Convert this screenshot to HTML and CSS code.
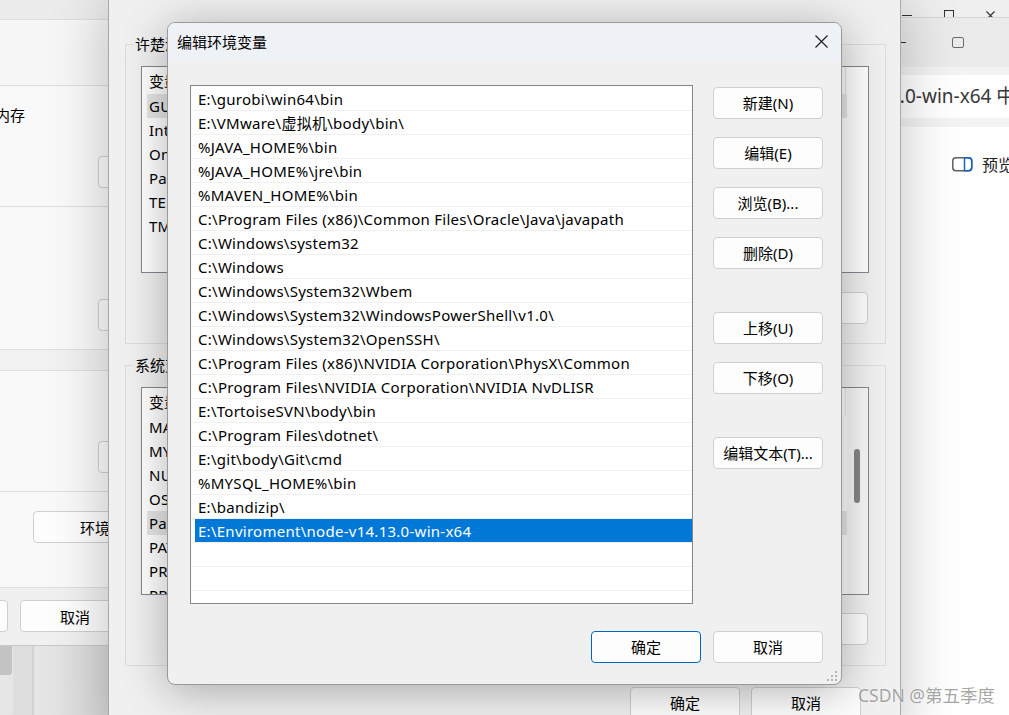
FILE: index.html
```html
<!DOCTYPE html>
<html lang="zh-CN">
<head>
<meta charset="utf-8">
<title>编辑环境变量</title>
<link rel="stylesheet" href="styles.css">
</head>
<body>
<div class="desk">

  <div class="bl-area"><div class="bl-block"></div><div class="bl-strip"></div></div>

  <div class="win win-a">
    <div class="ctrl-row">
      <span class="ctl"><span class="i-min"></span></span>
      <span class="ctl"><span class="i-max"></span></span>
      <span class="ctl"><svg class="i-x" width="9" height="9" viewBox="0 0 9 9"><path d="M0.5 0.5 L8.5 8.5 M8.5 0.5 L0.5 8.5" stroke="#333" stroke-width="1.1"/></svg></span>
    </div>
  </div>

  <div class="win win-b">
    <div class="b-title">
      <span class="i-min b-min"></span>
      <span class="b-max"></span>
    </div>
    <div class="b-band"></div>
    <div class="b-panel">3.0-win-x64 中</div>
    <div class="b-band b-band2"></div>
    <div class="b-content">
      <div class="preview">
        <svg width="21" height="15" viewBox="0 0 21 15"><rect x="0.75" y="0.75" width="19" height="13" rx="3.2" fill="none" stroke="#616161" stroke-width="1.5"/><path d="M12.5 0.75 H16.6 A3.2 3.2 0 0 1 19.75 3.9 V10.6 A3.2 3.2 0 0 1 16.6 13.75 H12.5 Z" fill="none" stroke="#1565c0" stroke-width="1.5"/></svg>
        <span class="preview-t">预览</span>
      </div>
    </div>
  </div>

  <div class="win sysprop">
    <div class="sp-sec sp-top"></div>
    <div class="sp-sec sp-a"></div>
    <div class="sp-sec sp-b">
      <div class="sp-text">内存</div>
      <div class="sp-btn sp-btn-r"></div>
    </div>
    <div class="sp-sec sp-c">
      <div class="sp-btn sp-btn-r"></div>
    </div>
    <div class="sp-sec sp-band"></div>
    <div class="sp-sec sp-d">
      <div class="sp-btn sp-btn-r"></div>
    </div>
    <div class="sp-sec sp-e">
      <div class="sp-btn sp-btn-env">环境变量(N)...</div>
    </div>
    <div class="sp-foot">
      <div class="sp-btn sp-btn-ok">确定</div>
      <div class="sp-btn sp-btn-cancel">取消</div>
    </div>
  </div>

  <div class="win envwin">
    <fieldset class="grp grp1">
      <legend>许楚涵 的用户变量(U)</legend>
      <div class="lv lv1">
        <div class="lv-main">
          <div class="lv-head"><span class="h1">变量</span><span class="h2">值</span></div>
          <div class="lv-row sel"><span class="n">GUROBI_HOME</span><span class="v">E:\gurobi\win64</span></div>
          <div class="lv-row"><span class="n">IntelliJ IDEA</span><span class="v">E:\IDEA\bin;</span></div>
          <div class="lv-row"><span class="n">OneDrive</span><span class="v">C:\Users\OneDrive</span></div>
          <div class="lv-row"><span class="n">Path</span><span class="v">E:\gurobi\win64\bin</span></div>
          <div class="lv-row"><span class="n">TEMP</span><span class="v">%USERPROFILE%\AppData\Local\Temp</span></div>
          <div class="lv-row"><span class="n">TMP</span><span class="v">%USERPROFILE%\AppData\Local\Temp</span></div>
        </div>
      </div>
      <div class="grp-btns">
        <div class="btn">新建(N)...</div>
        <div class="btn">编辑(E)...</div>
        <div class="btn">删除(D)</div>
      </div>
    </fieldset>

    <fieldset class="grp grp2">
      <legend>系统变量(S)</legend>
      <div class="lv lv2">
        <div class="lv-main">
          <div class="lv-head"><span class="h1">变量</span><span class="h2">值</span></div>
          <div class="lv-row"><span class="n">MAVEN_HOME</span><span class="v">E:\maven</span></div>
          <div class="lv-row"><span class="n">MYSQL_HOME</span><span class="v">E:\mysql</span></div>
          <div class="lv-row"><span class="n">NUMBER_OF_PROCESSORS</span><span class="v">16</span></div>
          <div class="lv-row"><span class="n">OS</span><span class="v">Windows_NT</span></div>
          <div class="lv-row sel"><span class="n">Path</span><span class="v">E:\gurobi\win64\bin</span></div>
          <div class="lv-row"><span class="n">PATHEXT</span><span class="v">.COM;.EXE;.BAT</span></div>
          <div class="lv-row"><span class="n">PROCESSOR_ARCHITECTURE</span><span class="v">AMD64</span></div>
          <div class="lv-row"><span class="n">PROCESSOR_IDENTIFIER</span><span class="v">AMD64 Family 25</span></div>
        </div>
        <div class="lv-scroll"><div class="thumb"></div></div>
      </div>
      <div class="grp-btns">
        <div class="btn">新建(W)...</div>
        <div class="btn">编辑(I)...</div>
        <div class="btn">删除(L)</div>
      </div>
    </fieldset>

    <div class="env-foot">
      <div class="btn">确定</div>
      <div class="btn">取消</div>
    </div>
  </div>

  <div class="dialog">
    <div class="dlg-title">
      <span class="dlg-title-t">编辑环境变量</span>
      <span class="dlg-close"><svg width="13" height="13" viewBox="0 0 13 13"><path d="M0.5 0.5 L12.5 12.5 M12.5 0.5 L0.5 12.5" stroke="#1a1a1a" stroke-width="1.1"/></svg></span>
    </div>
    <div class="dlg-body">
      <div class="plist">
        <div class="pl-row"><div class="pl-cell">E:\gurobi\win64\bin</div></div>
        <div class="pl-row"><div class="pl-cell">E:\VMware\虚拟机\body\bin\</div></div>
        <div class="pl-row"><div class="pl-cell">%JAVA_HOME%\bin</div></div>
        <div class="pl-row"><div class="pl-cell">%JAVA_HOME%\jre\bin</div></div>
        <div class="pl-row"><div class="pl-cell">%MAVEN_HOME%\bin</div></div>
        <div class="pl-row"><div class="pl-cell">C:\Program Files (x86)\Common Files\Oracle\Java\javapath</div></div>
        <div class="pl-row"><div class="pl-cell">C:\Windows\system32</div></div>
        <div class="pl-row"><div class="pl-cell">C:\Windows</div></div>
        <div class="pl-row"><div class="pl-cell">C:\Windows\System32\Wbem</div></div>
        <div class="pl-row"><div class="pl-cell">C:\Windows\System32\WindowsPowerShell\v1.0\</div></div>
        <div class="pl-row"><div class="pl-cell">C:\Windows\System32\OpenSSH\</div></div>
        <div class="pl-row"><div class="pl-cell">C:\Program Files (x86)\NVIDIA Corporation\PhysX\Common</div></div>
        <div class="pl-row"><div class="pl-cell">C:\Program Files\NVIDIA Corporation\NVIDIA NvDLISR</div></div>
        <div class="pl-row"><div class="pl-cell">E:\TortoiseSVN\body\bin</div></div>
        <div class="pl-row"><div class="pl-cell">C:\Program Files\dotnet\</div></div>
        <div class="pl-row"><div class="pl-cell">E:\git\body\Git\cmd</div></div>
        <div class="pl-row"><div class="pl-cell">%MYSQL_HOME%\bin</div></div>
        <div class="pl-row"><div class="pl-cell">E:\bandizip\</div></div>
        <div class="pl-row sel"><div class="pl-cell">E:\Enviroment\node-v14.13.0-win-x64</div></div>
        <div class="pl-row"><div class="pl-cell"></div></div>
        <div class="pl-row"><div class="pl-cell"></div></div>
        <div class="pl-row"><div class="pl-cell"></div></div>
      </div>
      <div class="dlg-side">
        <div class="btn b-first">新建(N)</div>
        <div class="btn">编辑(E)</div>
        <div class="btn">浏览(B)...</div>
        <div class="btn">删除(D)</div>
        <div class="btn b-gap">上移(U)</div>
        <div class="btn">下移(O)</div>
        <div class="btn b-gap">编辑文本(T)...</div>
      </div>
    </div>
    <div class="dlg-foot">
      <div class="btn btn-default">确定</div>
      <div class="btn">取消</div>
    </div>
    <svg class="grip" width="11" height="11" viewBox="0 0 11 11"><g fill="#b5b5b5"><rect x="8" y="0" width="2" height="2"/><rect x="4" y="4" width="2" height="2"/><rect x="8" y="4" width="2" height="2"/><rect x="0" y="8" width="2" height="2"/><rect x="4" y="8" width="2" height="2"/><rect x="8" y="8" width="2" height="2"/></g></svg>
  </div>

  <div class="watermark">CSDN @第五季度</div>
</div>
</body>
</html>
```

FILE: styles.css
```css
* { box-sizing: border-box; }
html, body { margin: 0; padding: 0; }
body {
  width: 1009px; height: 715px; overflow: hidden; background: #fff;
  font-family: "Noto Sans", "Noto Sans CJK SC", sans-serif;
  font-size: 15px; color: #000;
}
.desk { position: relative; width: 1009px; height: 715px; overflow: hidden; background: #fff; }

.win { position: absolute; }

/* generic button */
.btn {
  width: 110px; height: 32px; background: #fdfdfd;
  border: 1px solid #d0d0d0; border-radius: 4px;
  display: flex; align-items: center; justify-content: center;
  font-size: 15px; line-height: 20px; white-space: nowrap; color: #000;
  font-family: "Noto Sans", "Noto Sans CJK SC", sans-serif;
}

/* bottom-left desktop area */
.bl-area {
  position: absolute; left: 0; top: 640px; width: 130px; height: 80px;
  background: linear-gradient(to right, #e6e6e6 0%, #e4e4e4 40%, #d2d2d2 100%);
  display: flex; align-items: flex-start;
}
.bl-block { width: 12px; height: 35px; background: #c3c3c3; border-bottom-right-radius: 3px; }
.bl-strip { width: 21px; height: 80px; margin-left: 1px; background: #dedede; border-right: 2px solid #d2d2d2; }

/* top-right window A */
.win-a { left: 880px; top: 0; width: 140px; height: 30px; background: #efefef; }
.ctrl-row { display: flex; justify-content: flex-end; align-items: center; height: 30px; padding-right: 9px; }
.ctl { width: 41.5px; height: 30px; display: flex; align-items: center; justify-content: center; }
.i-min { display: block; width: 10px; height: 1px; background: #333; }
.i-max { display: block; width: 10px; height: 10px; border: 1px solid #333; }

/* window B */
.win-b { left: 880px; top: 17px; width: 140px; height: 698px; background: #fff; border-top: 1px solid #d6d6d6; display: flex; flex-direction: column; }
.b-title { height: 49px; background: #ebebeb; display: flex; align-items: center; padding-left: 16px; }
.b-min { margin-top: -1px; }
.b-max { width: 12px; height: 11px; border: 1px solid #6b6b6b; border-radius: 2px; margin-left: 46px; }
.b-band { height: 8px; background: #f3f3f3; }
.b-band2 { height: 9px; }
.b-panel { height: 43px; background: #fff; padding-left: 9px; line-height: 43px; font-size: 19px; color: #383838; white-space: nowrap; font-family: "Noto Sans", "Noto Sans CJK SC", sans-serif; }
.b-content { flex: 1; background: #fff; padding: 30px 0 0 72px; }
.preview { display: flex; align-items: center; height: 15px; }
.preview-t { margin-left: 9px; font-size: 16px; line-height: 20px; color: #222; white-space: nowrap; }

/* left window: system properties */
.sysprop { left: 0; top: 0; width: 250px; height: 646px; background: #f9f9f9; border-bottom: 1px solid #c8c8c8; display: flex; flex-direction: column; }
.sp-sec { border-bottom: 1px solid #dedede; }
.sp-top { height: 20px; background: #ececec; }
.sp-a { height: 66px; background: #f6f6f6; }
.sp-b { height: 121px; padding-top: 19px; }
.sp-text { line-height: 20px; font-size: 15px; margin-left: -5px; font-family: "Noto Sans CJK SC", sans-serif; }
.sp-btn {
  height: 32px; width: 110px; background: #fdfdfd; border: 1px solid #d0d0d0; border-radius: 4px;
  display: flex; align-items: center; justify-content: center; font-size: 15px; white-space: nowrap;
  font-family: "Noto Sans CJK SC", sans-serif;
}
.sp-btn-r { margin-left: 98px; }
.sp-b .sp-btn-r { margin-top: 31px; }
.sp-c { height: 143px; padding-top: 92px; }
.sp-band { height: 21px; background: #f2f2f2; }
.sp-d { height: 121px; padding-top: 70px; }
.sp-e { height: 96px; padding-top: 19px; }
.sp-btn-env { margin-left: 33px; width: 180px; justify-content: flex-start; padding-left: 46px; }
.sp-foot { flex: 1; background: #f0f0f0; display: flex; gap: 12px; padding-top: 12px; margin-left: -102px; }

/* main environment variables window */
.envwin {
  left: 108px; top: 0; width: 793px; height: 740px; background: #f0f0f0;
  border-left: 1px solid #a9a9a9; border-right: 1px solid #a9a9a9;
  padding: 35px 14px 0 16px;
  box-shadow: 0 0 55px rgba(0,0,0,0.24);
  display: flex; flex-direction: column;
}
.grp { margin: 0; border: 1px solid #dcdcdc; padding: 0 16px 19px 15px; min-width: 0; }
.grp legend { font-size: 15px; line-height: 18px; padding: 0 2px; margin-left: -8px; font-family: "Noto Sans CJK SC", sans-serif; }
.grp2 { margin-top: 12px; padding-bottom: 20px; }
.lv { margin-top: 13px; border: 1px solid #828790; background: #fff; display: flex; overflow: hidden; }
.lv1 { height: 207px; }
.lv2 { height: 208px; }
.lv-main { flex: 1; min-width: 0; }
.lv-head { display: flex; height: 27px; line-height: 27px; font-family: "Noto Sans CJK SC", sans-serif; }
.lv-head .h1 { width: 200px; padding-left: 7px; border-right: 1px solid #e5e5e5; }
.lv-head .h2 { width: 504px; padding-left: 7px; border-right: 1px solid #e5e5e5; }
.lv-row { display: flex; height: 24px; line-height: 24px; margin-left: 5px; margin-right: 21px; padding-left: 2px; white-space: nowrap; letter-spacing: 0.25px; }
.lv2 .lv-row { margin-right: 0; }
.lv-row.sel { background: #e6e6e6; }
.lv-row .n { width: 195px; overflow: hidden; }
.grp-btns { display: flex; justify-content: flex-end; gap: 12px; margin-top: 19px; padding-right: 1px; }
.grp2 .grp-btns { margin-top: 18px; }
.lv-scroll { width: 21px; background: #f7f7f7; padding: 61px 0 0 7px; }
.thumb { width: 6px; height: 54px; background: #858585; border-radius: 3px; }
.env-foot { display: flex; justify-content: flex-end; gap: 11px; margin-top: 21px; padding-right: 25px; }

/* edit dialog */
.dialog {
  position: absolute; left: 167px; top: 22px; width: 675px; height: 663px;
  border: 1px solid #9a9a9a; border-radius: 8px; overflow: hidden;
  background: #f0f0f0; box-shadow: 0 6px 45px rgba(0,0,0,0.3);
  display: flex; flex-direction: column;
}
.dlg-title { height: 37px; background: #eef2f7; display: flex; align-items: center; justify-content: space-between; padding-left: 9px; }
.dlg-title-t { font-size: 15px; font-family: "Noto Sans CJK SC", sans-serif; line-height: 20px; }
.dlg-close { width: 40px; height: 37px; display: flex; align-items: center; justify-content: center; }
.dlg-body { display: grid; grid-template-columns: 503px 110px; column-gap: 20px; padding: 25px 18px 0 22px; }
.plist { height: 519px; border: 1px solid #828790; background: #fff; padding-top: 1px; overflow: hidden; }
.pl-row { height: 24px; border-bottom: 1px solid #f0f0f0; }
.pl-cell { margin-left: 4px; padding-left: 3px; height: 23px; line-height: 24px; white-space: nowrap; font-size: 15px; letter-spacing: 0.27px; }
.pl-row.sel .pl-cell { background: #0078d7; color: #fff; }
.dlg-side { display: flex; flex-direction: column; gap: 18px; padding-top: 2px; }
.dlg-side .b-gap { margin-top: 25px; }
.dlg-foot { display: flex; justify-content: flex-end; gap: 12px; padding: 27px 18px 0 0; }
.btn-default { border-color: #0067c0; }
.grip { position: absolute; right: 3px; bottom: 2px; }

.watermark {
  position: absolute; left: 858px; top: 684px; font-size: 17.5px; line-height: 22px;
  color: rgba(105,105,105,0.6); white-space: nowrap;
  font-family: "Noto Sans", "Noto Sans CJK SC", sans-serif;
  text-shadow: 0 0 2px rgba(255,255,255,0.9);
}
```
